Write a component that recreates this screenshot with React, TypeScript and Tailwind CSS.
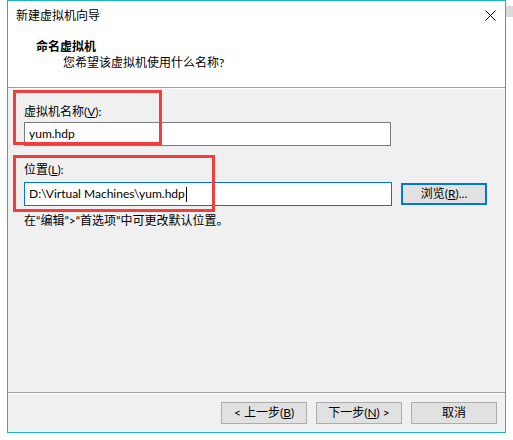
function App() {
  const font = { fontFamily: 'Lato, "Noto Sans CJK SC", sans-serif' };
  return (
    <div
      className="relative w-[513px] h-[440px] bg-white text-[12px] leading-[16px] text-black"
      style={font}
    >
      {/* scrollbar sliver behind the window */}
      <div className="absolute left-[506px] top-[6px] w-[7px] h-[11px] bg-[#dadada]" />

      <div className="ml-[7px] w-[499px] h-[433px] border border-[#18b7c7] bg-[#f0f0f0] flex flex-col">
        {/* header */}
        <div className="h-[86px] bg-white flex flex-col">
          <div className="h-[29px] flex items-center justify-between pl-[8px] pr-[9px]">
            <span>新建虚拟机向导</span>
            <svg width="11" height="11" viewBox="0 0 11 11" className="text-black">
              <path d="M0.5 0.5 L10.5 10.5 M10.5 0.5 L0.5 10.5" stroke="currentColor" strokeWidth="1" />
            </svg>
          </div>
          <div className="pl-[28px] mt-[9px] font-bold">命名虚拟机</div>
          <div className="pl-[55px]">您希望该虚拟机使用什么名称?</div>
        </div>
        <div className="h-px bg-[#a0a0a0]" />
        <div className="h-px bg-white" />

        {/* content */}
        <div className="flex-1 pl-[16px]">
          <div className="mt-[15px]">
            虚拟机名称(<u>V</u>):
          </div>
          <div className="mt-[2px] w-[367px] h-[24px] bg-white border border-[#7a7a7a] flex items-center pl-[4px]">
            yum.hdp
          </div>
          <div className="mt-[16px]">
            位置(<u>L</u>):
          </div>
          <div className="mt-[4px] flex items-center">
            <div className="w-[368px] h-[24px] bg-white border border-[#0078d7] flex items-center pl-[4px]">
              D:\Virtual Machines\yum.hdp
              <span className="inline-block w-px h-[15px] bg-black ml-px" />
            </div>
            <button className="ml-[9px] w-[86px] h-[22px] border-2 border-[#0078d7] bg-[#e1e1e1] flex items-center justify-center">
              浏览(<u>R</u>)...
            </button>
          </div>
          <div className="mt-[7px]">在“编辑”&gt;“首选项”中可更改默认位置。</div>
        </div>

        {/* footer */}
        <div className="h-px bg-[#a0a0a0]" />
        <div className="h-px bg-white" />
        <div className="h-[38px] flex items-start justify-end gap-[9px] pt-[8px] pr-[8px]">
          <button className="w-[86px] h-[22px] border border-[#adadad] bg-[#e1e1e1] flex items-center justify-center">
            &lt; 上一步(<u>B</u>)
          </button>
          <button className="w-[86px] h-[22px] border border-[#adadad] bg-[#e1e1e1] flex items-center justify-center">
            下一步(<u>N</u>) &gt;
          </button>
          <button className="w-[86px] h-[22px] border border-[#adadad] bg-[#e1e1e1] flex items-center justify-center">
            取消
          </button>
        </div>
      </div>

      {/* red annotation boxes */}
      <div className="absolute left-[13px] top-[90px] w-[149px] h-[55px] border-[3px] border-[#f23e3e]" />
      <div className="absolute left-[13px] top-[155px] w-[202px] h-[57px] border-[3px] border-[#f23e3e]" />
    </div>
  );
}

export default App;
